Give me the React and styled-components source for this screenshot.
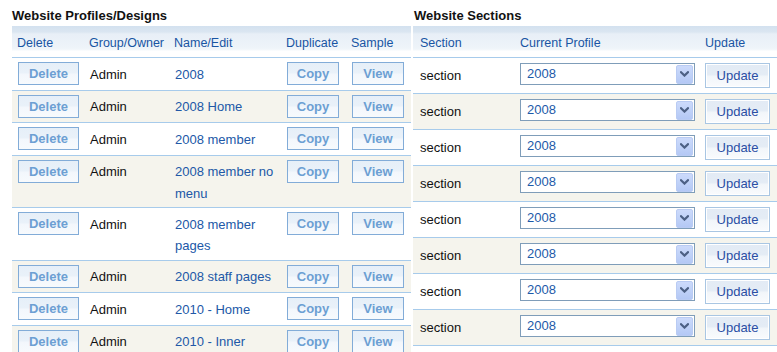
import React from "react";
import styled, { createGlobalStyle } from "styled-components";

const GlobalStyle = createGlobalStyle`
  html, body {
    margin: 0;
    padding: 0;
    overflow: hidden;
    background: #ffffff;
  }
  body {
    font-family: "Liberation Sans", Arial, sans-serif;
    font-size: 13px;
    color: #111111;
  }
`;

const Page = styled.div`
  display: flex;
  align-items: flex-start;
  gap: 2px;
  padding-left: 12px;
  width: max-content;
`;

const Panel = styled.section`
  display: flex;
  flex-direction: column;
  width: ${(p) => p.$width}px;
`;

const Title = styled.h2`
  margin: 0;
  padding: 8px 0 2px ${(p) => p.$indent || 0}px;
  font-size: 13px;
  line-height: 16px;
  font-weight: bold;
  color: #121212;
`;

const Table = styled.table`
  width: 100%;
  border-collapse: separate;
  border-spacing: 0;
  table-layout: fixed;
`;

const Th = styled.th`
  box-sizing: border-box;
  height: 32px;
  padding: 3px 0 0 ${(p) => p.$pad}px;
  text-align: left;
  vertical-align: middle;
  font-size: 12.5px;
  line-height: 16px;
  font-weight: normal;
  color: #1855a3;
  border-bottom: 1px solid #a7cbeb;
  background: linear-gradient(
    to bottom,
    #d3e1ef 0px,
    #dbe6f1 6px,
    #e8eff7 8px,
    #eef4f9 22px,
    #f4f8fb 24px,
    #ffffff 25px
  );
`;

const Td = styled.td`
  padding: ${(p) => (p.$tall ? "5px 4px 5px 7px" : "4.25px 4px 4.25px 6px")};
  vertical-align: top;
  line-height: ${(p) => (p.$tall ? "25px" : "21.5px")};
  font-size: 13px;
  color: #111111;
  border-bottom: 1px solid #a7cbeb;
  background: ${(p) => (p.$alt ? "#f5f4ed" : "#ffffff")};
`;

const CellText = styled.span`
  display: block;
  padding-top: 1.5px;
  margin-bottom: -1.5px;
  color: ${(p) => (p.$link ? "#2158a7" : "#111111")};
  cursor: ${(p) => (p.$link ? "pointer" : "default")};
`;

const SmallButton = styled.button`
  display: block;
  box-sizing: border-box;
  width: ${(p) => p.$width}px;
  height: 23px;
  margin: 0;
  padding: 0;
  border: 1px solid #82acd8;
  background: linear-gradient(
    to bottom,
    #e6eff8 0%,
    #e9f1f9 45%,
    #f3f7fc 55%,
    #f7fafd 100%
  );
  font-family: "Liberation Sans", Arial, sans-serif;
  font-size: 13px;
  font-weight: bold;
  line-height: 21px;
  color: #6c9fd3;
  text-align: center;
  cursor: pointer;
`;

const UpdateButton = styled.button`
  display: block;
  box-sizing: border-box;
  width: 65px;
  height: 25px;
  margin: 0;
  padding: 0;
  border: 1px solid #a9c6e3;
  box-shadow: inset 0 0 0 1px #ffffff;
  background: linear-gradient(
    to bottom,
    #e3ebf5 0%,
    #e4ecf5 45%,
    #f2f6fa 55%,
    #f9fbfd 100%
  );
  font-family: "Liberation Sans", Arial, sans-serif;
  font-size: 13px;
  line-height: 24px;
  color: #2a4ea4;
  text-align: center;
  cursor: pointer;
`;

const SelectBox = styled.div`
  box-sizing: border-box;
  width: 175px;
  height: 22px;
  border: 1px solid #7f9db9;
  background: #ffffff;
  display: flex;
  align-items: center;
  justify-content: space-between;
  padding: 0 1px 0 6px;
`;

const SelectValue = styled.span`
  color: #1d5aa9;
  font-size: 13px;
  line-height: 20px;
`;

const ArrowButton = styled.span`
  box-sizing: border-box;
  width: 17px;
  height: 19px;
  display: flex;
  align-items: center;
  justify-content: center;
  border: 1px solid #b9cbf3;
  border-radius: 2px;
  background: linear-gradient(to bottom, #ccdafb 0%, #c0d2f8 50%, #b4c8f5 100%);
`;

const profiles = [
  "2008",
  "2008 Home",
  "2008 member",
  "2008 member no menu",
  "2008 member pages",
  "2008 staff pages",
  "2010 - Home",
  "2010 - Inner",
];

const leftCols = [
  { label: "Delete", width: 72 },
  { label: "Group/Owner", width: 85 },
  { label: "Name/Edit", width: 112 },
  { label: "Duplicate", width: 65 },
  { label: "Sample", width: 65 },
];

const rightCols = [
  { label: "Section", width: 100 },
  { label: "Current Profile", width: 185 },
  { label: "Update", width: 92 },
];

function Chevron() {
  return (
    <svg width="9" height="6" viewBox="0 0 9 6" aria-hidden="true">
      <path
        d="M1 1.2 L4.5 4.6 L8 1.2"
        fill="none"
        stroke="#4d6185"
        strokeWidth="2.2"
        strokeLinecap="square"
      />
    </svg>
  );
}

function ProfilesPanel() {
  return (
    <Panel $width={399}>
      <Title>Website Profiles/Designs</Title>
      <Table>
        <colgroup>
          {leftCols.map((c) => (
            <col key={c.label} style={{ width: c.width }} />
          ))}
        </colgroup>
        <thead>
          <tr>
            {leftCols.map((c) => (
              <Th key={c.label} $pad={5}>
                {c.label}
              </Th>
            ))}
          </tr>
        </thead>
        <tbody>
          {profiles.map((name, i) => {
            const alt = i % 2 === 1;
            return (
              <tr key={name}>
                <Td $alt={alt}>
                  <SmallButton $width={61}>Delete</SmallButton>
                </Td>
                <Td $alt={alt}>
                  <CellText>Admin</CellText>
                </Td>
                <Td $alt={alt}>
                  <CellText $link>{name}</CellText>
                </Td>
                <Td $alt={alt}>
                  <SmallButton $width={52}>Copy</SmallButton>
                </Td>
                <Td $alt={alt}>
                  <SmallButton $width={52}>View</SmallButton>
                </Td>
              </tr>
            );
          })}
        </tbody>
      </Table>
    </Panel>
  );
}

function SectionsPanel() {
  return (
    <Panel $width={377}>
      <Title $indent={1}>Website Sections</Title>
      <Table>
        <colgroup>
          {rightCols.map((c) => (
            <col key={c.label} style={{ width: c.width }} />
          ))}
        </colgroup>
        <thead>
          <tr>
            {rightCols.map((c) => (
              <Th key={c.label} $pad={7}>
                {c.label}
              </Th>
            ))}
          </tr>
        </thead>
        <tbody>
          {Array.from({ length: 8 }).map((_, i) => {
            const alt = i % 2 === 1;
            return (
              <tr key={i}>
                <Td $tall $alt={alt}>
                  section
                </Td>
                <Td $tall $alt={alt}>
                  <SelectBox>
                    <SelectValue>2008</SelectValue>
                    <ArrowButton>
                      <Chevron />
                    </ArrowButton>
                  </SelectBox>
                </Td>
                <Td $tall $alt={alt}>
                  <UpdateButton>Update</UpdateButton>
                </Td>
              </tr>
            );
          })}
        </tbody>
      </Table>
    </Panel>
  );
}

export default function App() {
  return (
    <>
      <GlobalStyle />
      <Page>
        <ProfilesPanel />
        <SectionsPanel />
      </Page>
    </>
  );
}
